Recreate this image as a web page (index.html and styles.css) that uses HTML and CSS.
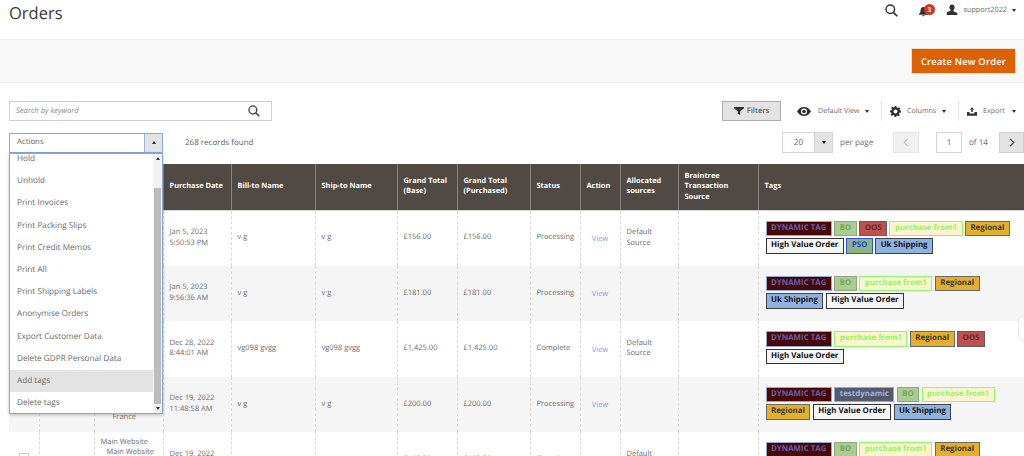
FILE: index.html
```html
<!DOCTYPE html>
<html lang="en">
<head>
<meta charset="utf-8">
<title>Orders</title>
<link rel="stylesheet" href="styles.css">
</head>
<body>
<div class="page">
  <header class="topbar">
    <h1 class="title">Orders</h1>
    <div class="top-actions">
      <svg class="i-search-top" viewBox="0 0 14 14"><circle cx="5.7" cy="5.7" r="4.6" fill="none" stroke="#303030" stroke-width="1.5"/><path d="M9 9l4.2 4.2" stroke="#303030" stroke-width="1.8" fill="none"/></svg>
      <div class="bell">
        <svg class="i-bell" viewBox="0 0 12 12"><path d="M6 1c2.400 0 3.200 1.800 3.200 3.800 0 2 .8 3 1.800 3.900v.8H1v-.8c1-.9 1.800-1.900 1.800-3.900C2.800 2.800 3.600 1 6 1zM4.700 10h2.600c0 .8-.6 1.300-1.300 1.300S4.700 10.800 4.700 10z" fill="#303030"/></svg>
        <span class="badge">3</span>
      </div>
      <div class="user">
        <svg class="i-user" viewBox="0 0 12 12"><path d="M6 .5c1.700 0 2.600 1.300 2.600 2.900 0 1.200-.5 2.300-1.200 2.900v1l3.900 1.600v2.100H.7V8.300l3.900-1.600v-1C3.900 5.100 3.400 4.600 3.400 3.400 3.400 1.800 4.300.5 6 .5z" fill="#303030"/></svg>
        <span>support2022</span>
        <span class="caret dark"></span>
      </div>
    </div>
  </header>

  <section class="band">
    <button class="create">Create New Order</button>
  </section>

  <section class="search-row">
    <div class="search">
      <span class="placeholder">Search by keyword</span>
      <svg class="i-search" viewBox="0 0 14 14"><circle cx="5.700" cy="5.700" r="4.600" fill="none" stroke="#404040" stroke-width="1.500"/><path d="M9 9l4.200 4.200" stroke="#404040" stroke-width="1.800" fill="none"/></svg>
    </div>
    <div class="tools">
      <button class="filters">
        <svg class="i-filter" viewBox="0 0 10 8"><path d="M0 0h10v1.200L6.200 4.200V8L3.800 6.800V4.200L0 1.200z" fill="#303030"/></svg>
        Filters
      </button>
      <div class="tool t-view">
        <svg class="i-eye" viewBox="0 0 14 9"><path d="M7 0c3 0 5.500 2 7 4.500C12.500 7 10 9 7 9S1.500 7 0 4.500C1.500 2 4 0 7 0z" fill="#303030"/><circle cx="7" cy="4.500" r="3" fill="#fff"/><circle cx="7" cy="4.500" r="1.800" fill="#303030"/></svg>
        <span>Default View</span><span class="caret dark"></span>
      </div>
      <div class="tool t-columns">
        <svg class="i-gear" viewBox="0 0 12 12"><path d="M5 0h2l.3 1.700 1.200.5L10 1.300l1.300 1.400-1 1.400.6 1.200L12 5v2l-1.700.3-.5 1.200 1 1.500-1.400 1.300-1.400-1-1.200.6L7 12H5l-.3-1.700-1.200-.5-1.500 1-1.300-1.400 1-1.400-.6-1.200L0 7V5l1.700-.3.500-1.200-1-1.500L2.600.7l1.400 1 1.200-.6z" fill="#303030"/><circle cx="6" cy="6" r="2.100" fill="#fff"/></svg>
        <span>Columns</span><span class="caret dark"></span>
      </div>
      <div class="tool t-export">
        <svg class="i-export" viewBox="0 0 12 10"><path d="M6 0l2.500 2.600H6.900v3H5.100v-3H3.500zM0 5.500h3v1.800h6V5.500h3V10H0z" fill="#303030"/></svg>
        <span>Export</span><span class="caret dark"></span>
      </div>
    </div>
  </section>

  <section class="pager-row">
    <div class="actions">
      <span class="actions-label">Actions</span>
      <span class="actions-btn"><span class="caret up"></span></span>
    </div>
    <span class="found">268 records found</span>
    <div class="pager">
      <div class="perpage">
        <span class="perpage-val">20</span>
        <span class="perpage-btn"><span class="caret dark"></span></span>
      </div>
      <span class="perpage-label">per page</span>
      <button class="nav prev"><svg viewBox="0 0 6 10"><path d="M5 1L1 5l4 4" fill="none" stroke="#c4c4c4" stroke-width="1.300"/></svg></button>
      <span class="page-input">1</span>
      <span class="of">of 14</span>
      <button class="nav next"><svg viewBox="0 0 6 10"><path d="M1 1l4 4-4 4" fill="none" stroke="#514943" stroke-width="1.300"/></svg></button>
    </div>
  </section>

  <table class="grid">
    <colgroup>
      <col class="c-check"><col class="c-id"><col class="c-store"><col class="c-date"><col class="c-bill"><col class="c-ship"><col class="c-base"><col class="c-purch"><col class="c-status"><col class="c-action"><col class="c-alloc"><col class="c-brain"><col class="c-tags">
    </colgroup>
    <thead>
      <tr>
        <th></th><th></th><th></th><th>Purchase Date</th><th>Bill-to Name</th><th>Ship-to Name</th><th>Grand Total (Base)</th><th>Grand Total (Purchased)</th><th>Status</th><th>Action</th><th>Allocated sources</th><th>Braintree Transaction Source</th><th>Tags</th>
      </tr>
    </thead>
    <tbody>
      <tr>
        <td></td><td></td><td></td>
        <td>Jan 5, 2023<br>5:50:53 PM</td><td>v g</td><td>v g</td><td>£156.00</td><td>£156.00</td><td>Processing</td><td class="act"><a class="view">View</a></td><td>Default Source</td><td></td>
        <td class="tags"><span class="tag dyn">DYNAMIC TAG</span><span class="tag bo">BO</span><span class="tag oos">OOS</span><span class="tag pur">purchase from1</span><span class="tag reg">Regional</span><span class="tag hvo">High Value Order</span><span class="tag pso">PSO</span><span class="tag uk">Uk Shipping</span></td>
      </tr>
      <tr>
        <td></td><td></td><td></td>
        <td>Jan 5, 2023<br>9:56:36 AM</td><td>v g</td><td>v g</td><td>£181.00</td><td>£181.00</td><td>Processing</td><td class="act"><a class="view">View</a></td><td></td><td></td>
        <td class="tags"><span class="tag dyn">DYNAMIC TAG</span><span class="tag bo">BO</span><span class="tag pur">purchase from1</span><span class="tag reg">Regional</span><span class="tag uk">Uk Shipping</span><span class="tag hvo">High Value Order</span></td>
      </tr>
      <tr>
        <td></td><td></td><td></td>
        <td>Dec 28, 2022<br>8:44:01 AM</td><td>vg098 gvgg</td><td>vg098 gvgg</td><td>£1,425.00</td><td>£1,425.00</td><td>Complete</td><td class="act"><a class="view">View</a></td><td>Default Source</td><td></td>
        <td class="tags"><span class="tag dyn">DYNAMIC TAG</span><span class="tag pur">purchase from1</span><span class="tag reg">Regional</span><span class="tag oos">OOS</span><span class="tag hvo">High Value Order</span></td>
      </tr>
      <tr>
        <td></td><td></td>
        <td class="store"><div>Main Website</div><div class="ind1">Main Website</div><div class="ind1">Store</div><div class="ind2">France</div></td>
        <td>Dec 19, 2022<br>11:48:58 AM</td><td>v g</td><td>v g</td><td>£200.00</td><td>£200.00</td><td>Processing</td><td class="act"><a class="view">View</a></td><td></td><td></td>
        <td class="tags"><span class="tag dyn">DYNAMIC TAG</span><span class="tag test">testdynamic</span><span class="tag bo">BO</span><span class="tag pur">purchase from1</span><span class="tag reg">Regional</span><span class="tag hvo">High Value Order</span><span class="tag uk">Uk Shipping</span></td>
      </tr>
      <tr>
        <td class="check-cell"><span class="check"></span></td><td class="id-cell">000000000</td>
        <td class="store"><div>Main Website</div><div class="ind1">Main Website</div><div class="ind1">Store</div><div class="ind2">France</div></td>
        <td>Dec 19, 2022<br>9:12:40 AM</td><td></td><td></td><td>£143.70</td><td>£143.70</td><td>Complete</td><td class="act"><a class="view">View</a></td><td>Default Source</td><td></td>
        <td class="tags"><span class="tag dyn">DYNAMIC TAG</span><span class="tag bo">BO</span><span class="tag pur">purchase from1</span><span class="tag reg">Regional</span><span class="tag hvo">High Value Order</span></td>
      </tr>
    </tbody>
  </table>

  <div class="menu">
    <ul class="menu-list">
      <li>Hold</li>
      <li>Unhold</li>
      <li>Print Invoices</li>
      <li>Print Packing Slips</li>
      <li>Print Credit Memos</li>
      <li>Print All</li>
      <li>Print Shipping Labels</li>
      <li>Anonymise Orders</li>
      <li>Export Customer Data</li>
      <li>Delete GDPR Personal Data</li>
      <li class="hover">Add tags</li>
      <li>Delete tags</li>
    </ul>
    <div class="scrollbar">
      <span class="sb-arrow"><span class="caret up tiny"></span></span>
      <span class="sb-track"><span class="sb-thumb"></span></span>
      <span class="sb-arrow"><span class="caret tiny dark"></span></span>
    </div>
  </div>
  <div class="nub"></div>
</div>
</body>
</html>
```
FILE: styles.css
```css
* { box-sizing: border-box; }
html, body { margin: 0; padding: 0; }
body {
  font-family: "Open Sans", "Liberation Sans", sans-serif;
  font-size: 8.200px;
  color: #5d5d5d;
  background: #fff;
  overflow: hidden;
  height: 456px;
  text-rendering: geometricPrecision;
}
.page { position: relative; width: 1024px; height: 456px; overflow: hidden; }

.caret { display: inline-block; width: 0; height: 0; border-left: 2.500px solid transparent; border-right: 2.500px solid transparent; border-top: 3px solid #303030; }
.caret.up { border-top: 0; border-bottom: 3px solid #303030; }
.caret.tiny { border-left-width: 2.500px; border-right-width: 2.500px; }

.topbar { display: flex; justify-content: space-between; align-items: flex-start; height: 39px; padding-left: 9px; }
.title { margin: 0; font-size: 16.500px; font-weight: 400; line-height: 26px; color: #41362f; }
.top-actions { display: flex; align-items: center; height: 20px; }
.i-search-top { width: 13px; height: 13px; margin-right: 20px; }
.bell { position: relative; width: 28px; height: 14px; }
.i-bell { position: absolute; left: 0; top: 3px; width: 11px; height: 11px; }
.badge { position: absolute; left: 5.500px; top: 1px; width: 11px; height: 11px; border-radius: 50%; background: #d4342a; color: #fff; font-size: 6.500px; font-weight: 700; line-height: 11px; text-align: center; }
.user { display: flex; align-items: center; gap: 5px; padding-right: 8px; font-size: 7.300px; color: #6a6a6a; }
.i-user { width: 12px; height: 12px; }

.band { display: flex; justify-content: flex-end; align-items: center; height: 44px; padding-right: 8px; background: #f8f8f8; border-top: 1px solid #efefef; border-bottom: 1px solid #efefef; }
.create { width: 105px; height: 26px; border: 1px solid #f0dccb; background: #dd6100; color: #fff; font: 600 9.400px "Open Sans", sans-serif; letter-spacing: .2px; padding: 0; text-rendering: geometricPrecision; }

.search-row { display: flex; justify-content: space-between; align-items: center; height: 20px; margin-top: 18px; padding-left: 9px; }
.search { display: flex; justify-content: space-between; align-items: center; width: 263px; height: 20px; border: 1px solid #cfcfcf; padding: 0 11px 0 6px; }
.placeholder { font-style: italic; color: #8a8a8a; font-size: 7.600px; }
.i-search { width: 12px; height: 12px; }
.tools { display: flex; align-items: center; }
.filters { display: flex; align-items: center; justify-content: center; gap: 3px; width: 59px; height: 20px; margin-right: 16px; background: #e3e3e3; border: 1px solid #adadad; color: #5d5d5d; font: 600 7.600px "Open Sans", sans-serif; padding: 0; text-rendering: geometricPrecision; }
.i-filter { width: 10px; height: 8px; }
.tool { display: flex; align-items: center; height: 20px; font-size: 7.100px; color: #6d6d6d; }
.t-view { width: 84px; }
.t-view span:first-of-type { margin-left: 7px; margin-right: 6px; }
.i-eye { width: 14px; height: 9px; }
.t-columns { width: 77px; border-left: 1px solid #e3e3e3; padding-left: 8px; }
.t-columns span:first-of-type { margin-left: 6px; margin-right: 6px; }
.i-gear { width: 11px; height: 11px; }
.t-export { width: 66px; border-left: 1px solid #e3e3e3; padding-left: 8px; }
.t-export span:first-of-type { margin-left: 6px; margin-right: 7px; }
.i-export { width: 10px; height: 9px; }

.pager-row { display: flex; align-items: center; height: 21px; margin-top: 11px; padding-left: 9px; position: relative; }
.actions { display: flex; width: 154px; height: 20px; border: 1px solid #85a9dc; }
.actions-label { flex: 1; padding-left: 7px; line-height: 17px; font-size: 7.800px; }
.actions-btn { display: flex; align-items: center; justify-content: center; width: 18px; background: #e3e3e3; border-left: 1px solid #9fb4d2; }
.found { margin-left: 22px; padding-bottom: 1px; font-size: 8px; }
.pager { display: flex; align-items: center; margin-left: auto; font-size: 8.100px; }
.perpage { display: flex; width: 51px; height: 21px; border: 1px solid #d6d6d6; }
.perpage-val { flex: 1; text-align: center; line-height: 19px; }
.perpage-btn { display: flex; align-items: center; justify-content: center; width: 18px; background: #e3e3e3; border-left: 1px solid #d0d0d0; }
.perpage-label { width: 53px; margin-left: 7px; color: #6d6d6d; }
.nav { display: flex; align-items: center; justify-content: center; height: 21px; padding: 0; }
.nav svg { width: 6px; height: 9px; }
.prev { width: 26px; background: #f0f0f0; border: 1px solid #e4e4e4; margin-right: 17px; }
.next { width: 25px; background: #e3e3e3; border: 1px solid #cfcfcf; }
.page-input { width: 26px; height: 21px; border: 1px solid #d6d6d6; text-align: center; line-height: 19px; }
.of { width: 37px; padding-left: 7px; color: #6d6d6d; }

.grid { border-collapse: collapse; table-layout: fixed; width: 1015px; margin-left: 9px; margin-top: 11px; font-size: 7.500px; line-height: 10.500px; color: #6a6a6a; }
.c-check { width: 30px; } .c-id { width: 55px; } .c-store { width: 69px; } .c-date { width: 68px; } .c-bill { width: 84px; } .c-ship { width: 82px; } .c-base { width: 60px; } .c-purch { width: 73px; } .c-status { width: 50px; } .c-action { width: 40px; } .c-alloc { width: 58px; } .c-brain { width: 80px; } .c-tags { width: 266px; }
.grid th { height: 46px; background: #514943; color: #fff; text-align: left; font-weight: 700; font-size: 7.400px; line-height: 10.500px; padding: 0 6px 1px; border-left: 1px solid #8a837d; border-bottom: 1px solid #d8d8d8; }
.grid td { height: 55.500px; padding: 0 6px 1px; border-left: 1px dashed #d8d8d8; vertical-align: middle; overflow: hidden; }
.grid th:first-child, .grid td:first-child { border-left: 0; }
.grid tbody tr:nth-child(even) td { background: #f5f5f5; }
.grid td.act { text-align: center; padding: 0 0 1px; }
.view { color: #7a9ee0; position: relative; top: 1.500px; }
.grid td.store { vertical-align: top; padding-top: 5px; line-height: 10px; white-space: nowrap; }
.ind1 { padding-left: 6px; }
.ind2 { padding-left: 12px; }
.grid td.check-cell { text-align: center; padding: 0; }
.check { display: inline-block; width: 10px; height: 10px; border: 1px solid #c8c8c8; background: #fff; }
.grid td.id-cell { padding: 0 0 0 7px; }

.grid td.tags { padding: 0 0 2px 7px; line-height: 17.500px; }
.tag { display: inline-block; height: 15.500px; margin: 1px 2.300px 1px 0; padding: 0 4.500px; border: 1.500px solid #555; font-weight: 700; font-size: 7.900px; line-height: 12.500px; white-space: nowrap; vertical-align: top; }
.dyn { background: #4a0505; border-color: #8aa9dc; color: #5f62b0; }
.bo { background: #a9cc93; border-color: #8fa97e; color: #7fa35f; }
.oos { background: #c0504d; border-color: #56606e; color: #5c2a3c; }
.pur { background: #fdf3cf; border-color: #8df96f; color: #8dfb5c; }
.reg { background: #e4b02c; border-color: #6a6a6a; color: #3a3a3a; }
.hvo { background: #f5f5f5; border-color: #333; color: #111; }
.pso { background: #8eb57c; border-color: #2a4ff0; color: #1a3cf5; }
.uk { background: #8fb3e0; border-color: #444; color: #111; }
.test { background: #555a6a; border-color: #8aa9dc; color: #9fb5df; }

.menu { position: absolute; left: 9px; top: 153px; width: 154px; height: 261px; display: flex; background: #fff; border: 1px solid #85a9dc; box-shadow: 0 1px 3px rgba(0,0,0,.25); overflow: hidden; }
.menu-list { flex: 1; margin: -6px 0 0; padding: 0; list-style: none; font-size: 8.200px; color: #6a6a6a; }
.menu-list li { height: 22.200px; line-height: 22.200px; padding-left: 7px; }
.menu-list .hover { background: #e3e3e3; }
.scrollbar { display: flex; flex-direction: column; width: 9px; background: #f1f1f1; }
.sb-arrow { display: flex; align-items: center; justify-content: center; height: 9px; flex: none; }
.sb-track { position: relative; flex: 1; }
.sb-thumb { position: absolute; left: 1px; right: 1px; top: 25px; bottom: 0; background: #bdbdbd; }
.nub { position: absolute; left: 1018px; top: 316px; width: 12px; height: 25px; background: #fff; border: 1px solid #e8e8e8; border-radius: 5px; }
```
